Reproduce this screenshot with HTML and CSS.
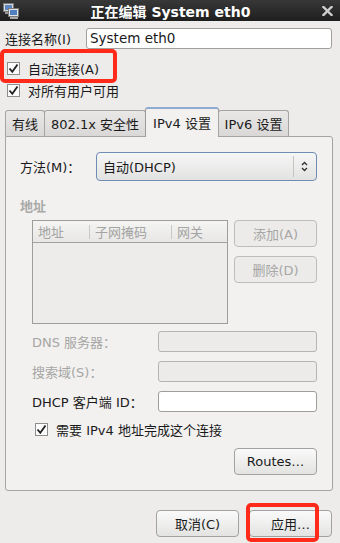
FILE: index.html
```html
<!DOCTYPE html>
<html lang="zh">
<head>
<meta charset="utf-8">
<link rel="stylesheet" href="styles.css">
</head>
<body>
<div class="window">
  <div class="titlebar">
    <svg class="ticon" width="16" height="16" viewBox="0 0 16 16">
      <rect x="0.5" y="0.5" width="10" height="8" fill="#d8d8d8" stroke="#7a7a7a"/>
      <rect x="2" y="2" width="7" height="5" fill="#5b86c2"/>
      <rect x="2" y="9" width="7" height="2" fill="#9a9a9a"/>
      <rect x="5.5" y="5.5" width="10" height="8" fill="#e4e4e4" stroke="#7a7a7a"/>
      <rect x="7" y="7" width="7" height="5" fill="#4f7fc0"/>
      <rect x="7" y="14" width="8" height="2" fill="#a8a8a8"/>
    </svg>
    <div class="title">正在编辑 System eth0</div>
    <svg class="close" width="11" height="10" viewBox="0 0 11 10">
      <path d="M1.5 1 L9.5 9 M9.5 1 L1.5 9" stroke="#cfcfcf" stroke-width="2.4" stroke-linecap="square"/>
    </svg>
  </div>

  <div class="content">
    <div class="name-row">
      <span class="name-label">连接名称(I)</span>
      <div class="entry">System eth0</div>
    </div>

    <div class="check-row first">
      <span class="cb"><svg width="11" height="11" viewBox="0 0 11 11"><path d="M1.5 5.5 L4.3 8.8 L9.5 1.5" fill="none" stroke="#202020" stroke-width="1.8"/></svg></span>
      <span>自动连接(A)</span>
      <span class="redmark mark1"></span>
    </div>
    <div class="check-row">
      <span class="cb"><svg width="11" height="11" viewBox="0 0 11 11"><path d="M1.5 5.5 L4.3 8.8 L9.5 1.5" fill="none" stroke="#202020" stroke-width="1.8"/></svg></span>
      <span>对所有用户可用</span>
    </div>

    <div class="tabs">
      <div class="tab t1">有线</div>
      <div class="tab t2">802.1x 安全性</div>
      <div class="tab active t3">IPv4 设置</div>
      <div class="tab t4">IPv6 设置</div>
    </div>

    <div class="panel">
      <div class="method-row">
        <span class="method-label">方法(M)：</span>
        <div class="combo">
          <span class="combo-text">自动(DHCP)</span>
          <span class="combo-sep"></span>
          <svg class="combo-arrow" width="7" height="11" viewBox="0 0 7 11">
            <path d="M1 4 L3.5 1.5 L6 4 M1 7 L3.5 9.5 L6 7" fill="none" stroke="#303030" stroke-width="1.3"/>
          </svg>
        </div>
      </div>

      <div class="section-title">地址</div>

      <div class="addr-block">
        <div class="addr-table">
          <div class="addr-head">
            <span class="col c1">地址</span>
            <span class="col c2">子网掩码</span>
            <span class="col c3">网关</span>
          </div>
        </div>
        <div class="addr-buttons">
          <div class="btn disabled">添加(A)</div>
          <div class="btn disabled">删除(D)</div>
        </div>
      </div>

      <div class="field-row">
        <span class="field-label dim">DNS 服务器：</span>
        <div class="field-input dis"></div>
      </div>
      <div class="field-row">
        <span class="field-label dim">搜索域(S)：</span>
        <div class="field-input dis"></div>
      </div>
      <div class="field-row">
        <span class="field-label">DHCP 客户端 ID：</span>
        <div class="field-input"></div>
      </div>

      <div class="check-row req">
        <span class="cb"><svg width="11" height="11" viewBox="0 0 11 11"><path d="M1.5 5.5 L4.3 8.8 L9.5 1.5" fill="none" stroke="#202020" stroke-width="1.8"/></svg></span>
        <span>需要 IPv4 地址完成这个连接</span>
      </div>

      <div class="routes-row">
        <div class="btn">Routes…</div>
      </div>
    </div>

    <div class="bottom-row">
      <div class="btn big">取消(C)</div>
      <div class="btn big apply">应用…<span class="redmark mark2"></span></div>
    </div>
  </div>
</div>
</body>
</html>
```

FILE: styles.css
```css
* { box-sizing: border-box; }
html, body { margin: 0; padding: 0; }
body {
  width: 340px;
  height: 543px;
  overflow: hidden;
  background: #edeceb;
  font-family: "DejaVu Sans", "Noto Sans CJK SC", sans-serif;
  font-size: 13px;
  color: #1a1a1a;
}
.window { display: flex; flex-direction: column; height: 543px; }

.titlebar {
  height: 21px;
  background: linear-gradient(#383838, #1e1e1e);
  display: flex;
  align-items: center;
  position: relative;
  padding: 0 7px 0 3px;
}
.ticon { flex: none; margin-top: 1px; }
.title {
  flex: 1;
  text-align: center;
  color: #ffffff;
  font-weight: bold;
  font-size: 14px;
  padding-left: 0;
}
.close { flex: none; }

.content { padding: 7px 8px 0 5px; display: flex; flex-direction: column; position: relative; }

.name-row { display: flex; align-items: center; height: 21px; }
.name-label { width: 81px; flex: none; }
.entry {
  flex: 1;
  height: 21px;
  border: 1px solid #a0a09e;
  border-radius: 3px;
  background: #ffffff;
  padding: 0 3px;
  line-height: 19px;
  font-size: 13.5px;
}

.check-row { display: flex; align-items: center; height: 22px; position: relative; }
.check-row.first { margin-top: 8px; }
.cb {
  width: 13px; height: 13px;
  border: 1px solid #8e8e8e;
  background: #fbfbfb;
  display: flex; align-items: center; justify-content: center;
  margin: 0 8px 0 2px;
  flex: none;
}

.redmark {
  position: absolute;
  border: 4px solid #ff2a1a;
  border-radius: 5px;
  pointer-events: none;
}
.mark1 { left: -5px; top: -8px; width: 117px; height: 34px; }

.tabs { display: flex; align-items: flex-end; height: 29px; margin-top: 6px; margin-left: 0; position: relative; z-index: 2; }
.tab {
  height: 26px;
  border: 1px solid #a4a4a2;
  border-bottom: none;
  border-radius: 3px 3px 0 0;
  background: linear-gradient(#e9e8e7, #d9d8d6);
  display: flex; align-items: center; justify-content: center;
  font-size: 13px;
}
.t1 { width: 40px; }
.t2 { width: 102px; margin-left: -1px; }
.t3 { width: 74px; margin-left: -1px; }
.t4 { width: 71px; margin-left: -1px; }
.tab.active {
  height: 30px;
  margin-bottom: -1px;
  background: #f2f1f0;
  border-color: #9a9a98;
  border-top: 2px solid #8eabd3;
  align-items: flex-start;
  padding-top: 4px;
}

.panel {
  width: 328px;
  height: 355px;
  border: 1px solid #a4a4a2;
  border-radius: 0 3px 3px 3px;
  background: #f2f1f0;
  padding: 15px 15px 0 14px;
  display: flex; flex-direction: column;
}

.method-row { display: flex; align-items: center; height: 29px; }
.method-label { width: 76px; flex: none; }
.combo {
  flex: 1;
  height: 29px;
  border: 1px solid #6f8cb4;
  border-radius: 4px;
  background: linear-gradient(#f6f6f6, #e2e2e1);
  display: flex; align-items: center;
  padding-left: 6px;
}
.combo-text { flex: 1; }
.combo-sep { width: 1px; height: 21px; background: #c4c4c2; margin-right: 7px; }
.combo-arrow { margin-right: 8px; }

.section-title { margin-top: 18px; font-weight: bold; color: #a9a9a7; height: 16px; line-height: 16px; }

.addr-block { display: flex; margin-top: 5px; margin-left: 12px; }
.addr-table {
  width: 196px; height: 104px;
  border: 1px solid #9d9d9b;
  background: #edeceb;
}
.addr-head {
  height: 22px;
  border-bottom: 1px solid #a2a2a0;
  background: linear-gradient(#f4f4f3, #e8e7e6);
  display: flex; align-items: center;
  color: #a3a3a1;
}
.col { display: flex; align-items: center; height: 14px; padding-left: 5px; }
.c1 { width: 56px; }
.c2 { width: 82px; border-left: 1px solid #c8c8c6; }
.c3 { border-left: 1px solid #c8c8c6; }

.addr-buttons { display: flex; flex-direction: column; gap: 9px; margin-left: 6px; }

.btn {
  width: 83px; height: 27px;
  border: 1px solid #a2a2a0;
  border-radius: 4px;
  background: linear-gradient(#fafafa, #e3e3e2);
  display: flex; align-items: center; justify-content: center;
  position: relative;
}
.btn.disabled { background: #ecebea; border-color: #bdbdbb; color: #a6a6a4; }

.field-row { display: flex; align-items: center; height: 21px; margin-left: 12px; margin-top: 9px; }
.addr-block + .field-row { margin-top: 7px; }
.field-label { width: 126px; flex: none; }
.dim { color: #a6a6a4; }
.field-input {
  width: 160px; height: 21px;
  border: 1px solid #9e9e9c;
  border-radius: 3px;
  background: #ffffff;
}
.field-input.dis { background: #ecebea; border-color: #b4b4b2; }

.check-row.req { margin-top: 6px; margin-left: 14px; height: 22px; }
.check-row.req .cb { margin-left: 1px; }

.routes-row { display: flex; justify-content: flex-end; margin-top: 8px; }

.bottom-row { display: flex; justify-content: flex-end; gap: 10px; margin-top: 19px; }
.btn.big { width: 83px; height: 27px; }
.mark2 { left: -4px; top: -8px; width: 73px; height: 39px; }
```
